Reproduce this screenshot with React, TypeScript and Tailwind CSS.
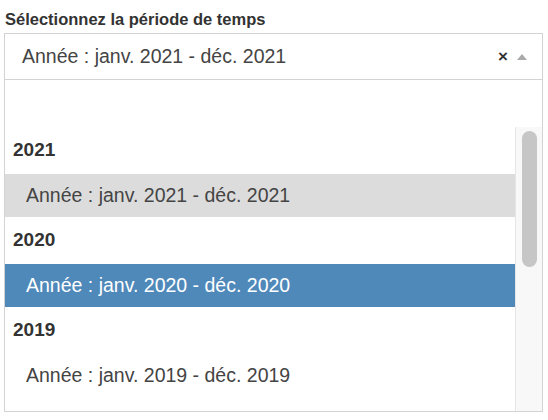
const groups = [
  { year: '2021', label: 'Année : janv. 2021 - déc. 2021', state: 'hover' },
  { year: '2020', label: 'Année : janv. 2020 - déc. 2020', state: 'selected' },
  { year: '2019', label: 'Année : janv. 2019 - déc. 2019', state: 'none' },
];

export default function App() {
  return (
    <div className="w-[548px] h-[420px] bg-white overflow-hidden font-['Liberation_Sans',Arial,sans-serif]">
      <div className="h-[33px] pl-[5px] pt-[9px] text-[16.5px] leading-[20px] font-bold text-[#333]">
        Sélectionnez la période de temps
      </div>

      <div className="ml-[4px] w-[539px] border border-[#d3d3d3]">
        {/* Current value */}
        <div className="h-[45px] flex items-center pl-[17px] pr-[15px] text-[19.5px] text-[#444]">
          <span className="flex-1">Année : janv. 2021 - déc. 2021</span>
          <span className="text-[17px] font-bold text-[#333] mr-[9px] leading-none">×</span>
          <svg width="10" height="6" viewBox="0 0 10 6">
            <path d="M0 6 L5 0 L10 6 Z" fill="#aaa" />
          </svg>
        </div>

        {/* Search area (empty) */}
        <div className="h-[48px] border-t border-[#d3d3d3]" />

        {/* Options list */}
        <div className="flex h-[284px]">
          <ul className="flex-1">
            {groups.map((g) => (
              <li key={g.year}>
                <div className="h-[47px] flex items-center pl-[8px] text-[19px] font-bold text-[#333]">{g.year}</div>
                <div
                  className={
                    'h-[43px] flex items-center pl-[21px] text-[19.5px] ' +
                    (g.state === 'selected'
                      ? 'bg-[#4f89ba] text-white'
                      : g.state === 'hover'
                        ? 'bg-[#dcdcdc] text-[#444]'
                        : 'text-[#444]')
                  }
                >
                  {g.label}
                </div>
              </li>
            ))}
          </ul>
          <div className="w-[27px] bg-[#f8f8f8] border-l border-[#e6e6e6] pt-[4px] flex justify-center">
            <div className="w-[15px] h-[136px] rounded-full bg-[#c6c6c6]" />
          </div>
        </div>
      </div>
    </div>
  );
}
